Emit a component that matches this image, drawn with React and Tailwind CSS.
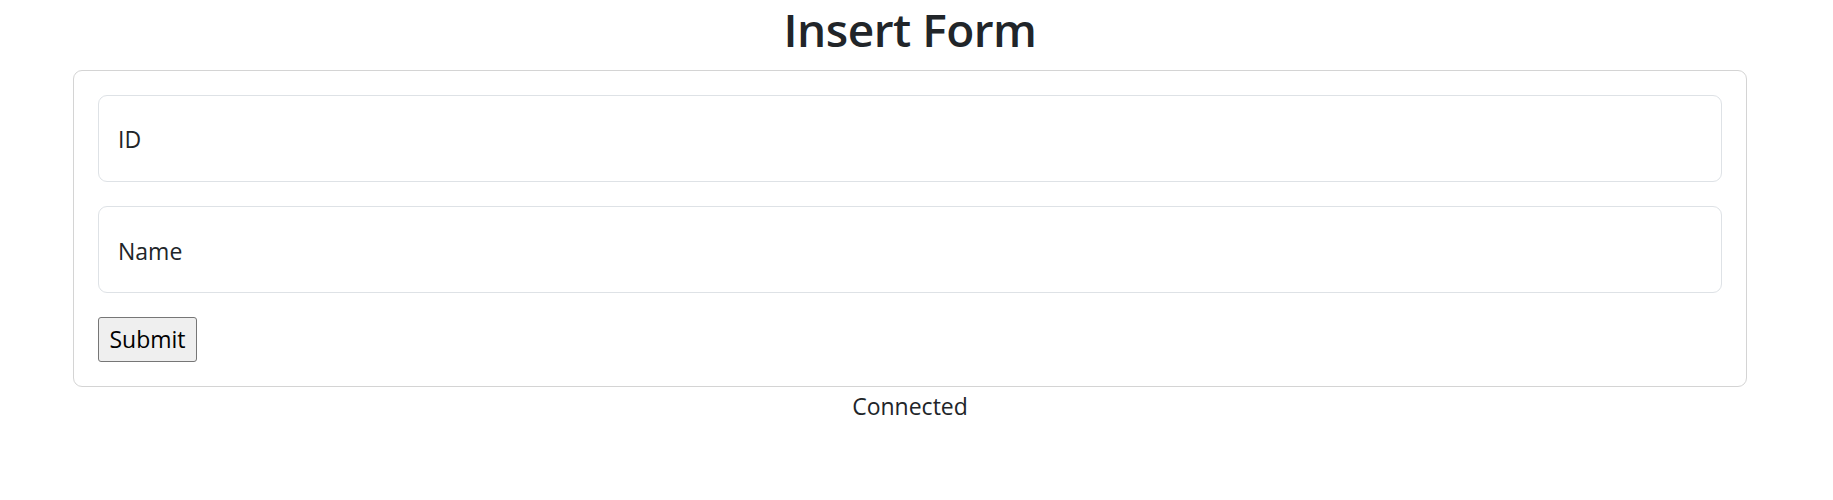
function App() {
    return (
    <div className="w-[1820px] text-[#212529] font-['Open_Sans','Noto_Sans',sans-serif] text-[24px] leading-[1.5]">
        <h1 className="text-center text-[46px] leading-[58px] font-semibold mb-[12px] tracking-[-0.5px]">Insert Form</h1>
        <div className="mx-[73px] border border-[#d4d4d4] rounded-[9px] p-[24px] flex flex-col gap-[24px]">
            <div className="h-[87px] border border-[#dee2e6] rounded-[9px] flex items-center px-[19px] pt-[2px] text-[23px]">
                <span>ID</span>
            </div>
            <div className="h-[87px] border border-[#dee2e6] rounded-[9px] flex items-center px-[19px] pt-[3px] text-[23px]">
                <span>Name</span>
            </div>
            <div>
                <button className="h-[45px] w-[99px] bg-[#efefef] border border-[#767676] rounded-[3px] text-black text-[23px] leading-none">Submit</button>
            </div>
        </div>
        <p className="text-center text-[23px] pt-[2px]">Connected</p>
    </div>
    )
}

export default App
